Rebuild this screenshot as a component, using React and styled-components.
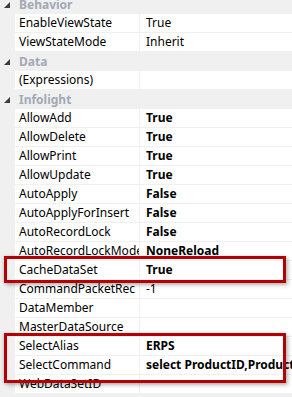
import React from "react"
import styled, { createGlobalStyle } from "styled-components"

const GlobalStyle = createGlobalStyle`
    html, body {
        margin: 0;
        padding: 0;
        background: #f0f0f0;
    }
    body {
        font-family: "Noto Sans", "DejaVu Sans", sans-serif;
        font-size: 12px;
        color: #000;
    }
`

const Grid = styled.div`
    width: 292px;
    height: 397px;
    overflow: hidden;
    background: #f0f0f0;
`

const Inner = styled.div`
    margin-top: -5px;
`

const Category = styled.div`
    display: flex;
    align-items: center;
    height: 19px;
    background: #f0f0f0;
`

const Toggle = styled.span`
    width: 15px;
    display: flex;
    justify-content: center;
    padding-right: 2px;
    box-sizing: border-box;
    svg{
        display: block;
    }
`

const CategoryName = styled.span`
    padding-left: 4px;
    font-weight: bold;
    color: #a3a9b4;
    font-size: 12px;
`

const Row = styled.div`
    display: grid;
    grid-template-columns: 15px 124px 1px 1fr;
    height: 19px;
    box-sizing: border-box;
    border-bottom: 1px solid #f0f0f0;
`

const Gutter = styled.div`
    background: #f0f0f0;
`

const Cell = styled.div`
    background: #fff;
    padding-left: ${p => p.$pad || 4}px;
    line-height: 18px;
    white-space: nowrap;
    overflow: hidden;
    min-width: 0;
    font-weight: ${p => p.$bold ? "bold" : "normal"};
`

const Divider = styled.div`
    background: #f0f0f0;
`

const Marked = styled.div`
    position: relative;
    &::after{
        content: "";
        position: absolute;
        top: ${p => p.$top}px;
        bottom: ${p => p.$bottom}px;
        left: 4px;
        right: 6px;
        border: 3px solid #b40000;
        box-shadow: 2px 2px 4px rgba(0,0,0,0.28), -1px 0 3px rgba(0,0,0,0.12);
        pointer-events: none;
    }
`

const Triangle = () =>
    <svg width="6" height="6" viewBox="0 0 6 6">
        <polygon points="6,0 6,6 0,6" fill="#3c3c3c"/>
    </svg>

const data = [
    { name: "Behavior", rows: [
        ["EnableViewState", "True"],
        ["ViewStateMode", "Inherit"],
    ]},
    { name: "Data", rows: [
        ["(Expressions)", ""],
    ]},
    { name: "Infolight", rows: [
        ["AllowAdd", "True", true],
        ["AllowDelete", "True", true],
        ["AllowPrint", "True", true],
        ["AllowUpdate", "True", true],
        ["AutoApply", "False", true],
        ["AutoApplyForInsert", "False", true],
        ["AutoRecordLock", "False", true],
        ["AutoRecordLockMode", "NoneReload", true],
        ["CacheDataSet", "True", true, "a"],
        ["CommandPacketRec", "-1"],
        ["DataMember", ""],
        ["MasterDataSource", ""],
        ["SelectAlias", "ERPS", true, "b"],
        ["SelectCommand", "select ProductID,ProductName", true, "b"],
        ["WebDataSetID", ""],
    ]},
]

const Property = ({ row }) =>
    <Row>
        <Gutter/>
        <Cell>{row[0]}</Cell>
        <Divider/>
        <Cell $pad={6} $bold={row[2]}>{row[1]}</Cell>
    </Row>

const marks = {
    a: { top: -5, bottom: -3 },
    b: { top: -4, bottom: -8 },
}

const renderRows = rows => {
    const out = []
    let i = 0
    while (i < rows.length) {
        const mark = rows[i][3]
        if (mark) {
            const group = []
            while (i < rows.length && rows[i][3] === mark) {
                group.push(rows[i])
                i++
            }
            out.push(
                <Marked key={group[0][0]} $top={marks[mark].top} $bottom={marks[mark].bottom}>
                    {group.map(r => <Property key={r[0]} row={r}/>)}
                </Marked>
            )
        } else {
            out.push(<Property key={rows[i][0]} row={rows[i]}/>)
            i++
        }
    }
    return out
}

const App = () =>
    <Grid>
        <GlobalStyle/>
        <Inner>
            {data.map(cat =>
                <React.Fragment key={cat.name}>
                    <Category>
                        <Toggle><Triangle/></Toggle>
                        <CategoryName>{cat.name}</CategoryName>
                    </Category>
                    {renderRows(cat.rows)}
                </React.Fragment>
            )}
        </Inner>
    </Grid>

export default App
